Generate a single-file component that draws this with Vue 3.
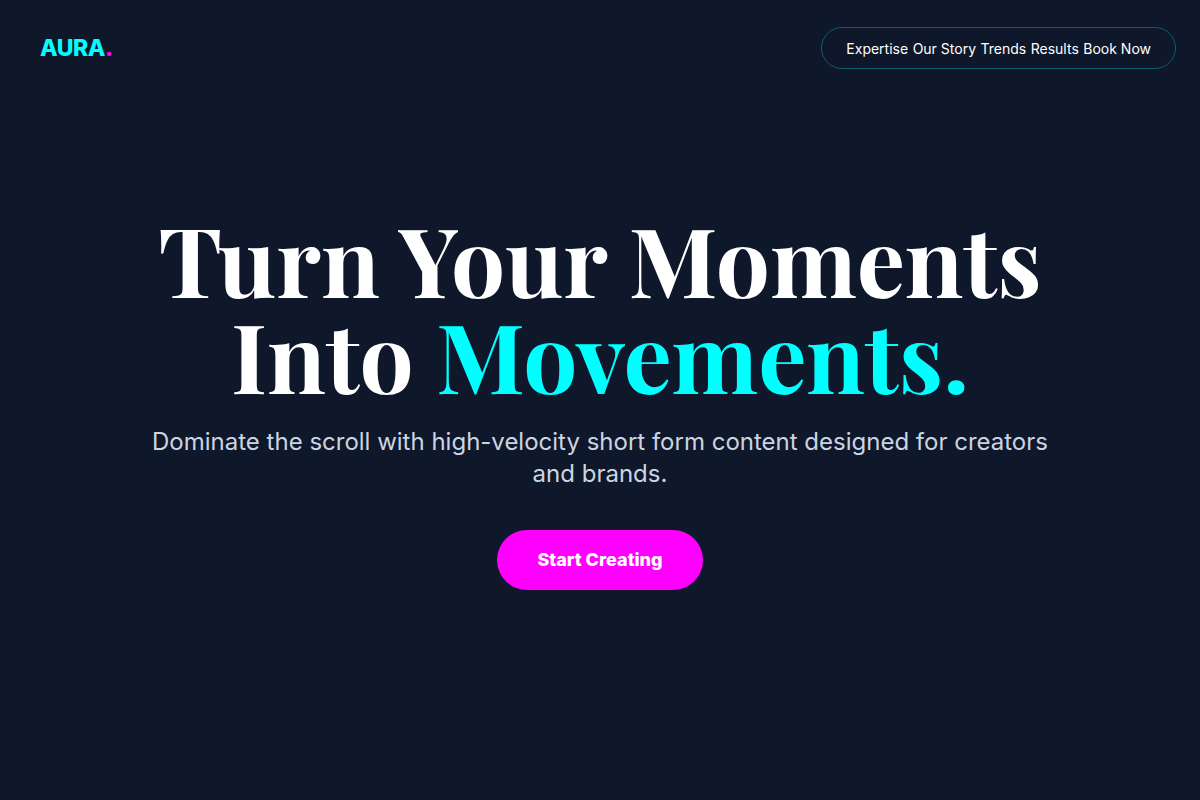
<script setup>
const links = [
  { label: 'Expertise', href: '#expertise' },
  { label: 'Our Story', href: '#story' },
  { label: 'Trends', href: '#trends' },
  { label: 'Results', href: '#results' },
  { label: 'Book Now', href: '#book' }
]
</script>

<template>
  <div class="page">
    <header class="header">
      <a class="logo" href="#">AURA<span class="dot">.</span></a>
      <nav class="nav" aria-label="Main">
        <template v-for="link in links" :key="link.href"><a :href="link.href">{{ link.label }}</a>{{ ' ' }}</template>
      </nav>
    </header>
    <main class="hero">
      <div class="content">
        <h1>Turn Your Moments <br>Into <span class="accent">Movements.</span></h1>
        <p>Dominate the scroll with high-velocity short form content designed for creators and brands.</p>
        <button type="button">Start Creating</button>
      </div>
    </main>
  </div>
</template>

<style>
body {
  margin: 0;
  background: #0f172a;
}
</style>

<style scoped>
.page {
  display: flex;
  flex-direction: column;
  box-sizing: border-box;
  min-height: 100vh;
  background: #0f172a;
  color: #fff;
  font-family: Inter, sans-serif;
}
.header {
  display: flex;
  justify-content: space-between;
  align-items: center;
  height: 96px;
  padding: 0 24px;
}
.logo {
  padding: 8px 16px;
  color: #0ff;
  font-size: 23px;
  line-height: 32px;
  font-weight: 800;
  letter-spacing: -0.02em;
  text-decoration: none;
}
.dot {
  color: #f0f;
}
.nav {
  padding: 8px 24px;
  border: 1px solid rgba(0, 255, 255, 0.3);
  border-radius: 9999px;
  font-size: 16px;
  line-height: 24px;
}
.nav a {
  color: inherit;
  font-size: 14px;
  line-height: 20px;
  text-decoration: none;
}
.hero {
  display: flex;
  flex: 1;
  justify-content: center;
  align-items: center;
  padding: 0 24px 96px;
}
.content {
  max-width: 896px;
  text-align: center;
}
h1 {
  margin: 0 0 24px;
  font-family: "Playfair Display", "Liberation Serif", serif;
  font-size: 96px;
  line-height: 96px;
  font-weight: 700;
}
.accent {
  color: #0ff;
}
p {
  margin: 0 0 40px;
  color: #cbd5e1;
  font-size: 24px;
  line-height: 32px;
}
button {
  padding: 16px 40px;
  border: 0;
  border-radius: 9999px;
  background: #f0f;
  color: #fff;
  font-family: inherit;
  font-size: 18px;
  line-height: 28px;
  font-weight: 800;
}
</style>
